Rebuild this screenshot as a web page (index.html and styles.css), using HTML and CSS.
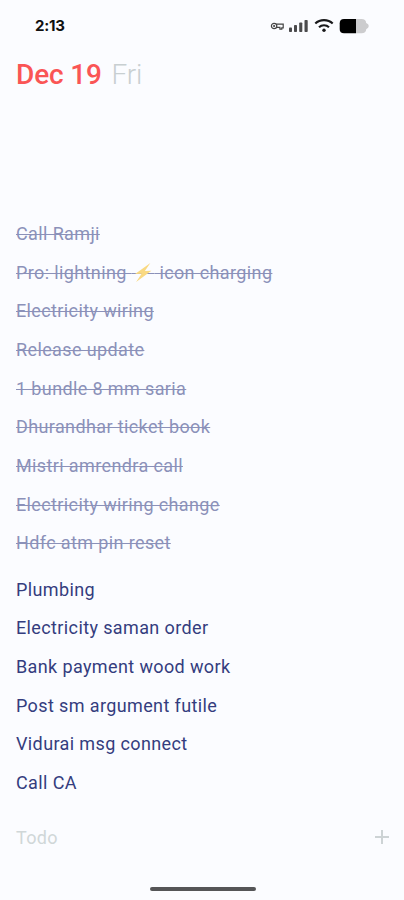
FILE: index.html
```html
<!DOCTYPE html>
<html lang="en">
<head>
<meta charset="utf-8">
<title>Todo</title>
<link rel="stylesheet" href="styles.css">
</head>
<body>
<div class="screen">
  <header class="status">
    <span class="time">2:13</span>
    <svg class="status-icons" width="102" height="20" viewBox="0 0 102 20">
      <g fill="none" stroke="#444" stroke-width="1.2">
        <path d="M6.4 8.1H13.2V11.8H11.8V13.2H9.9V11.3H6.4"/>
        <circle cx="4.1" cy="10" r="2.7"/>
        <circle cx="4.1" cy="10" r=".5"/>
      </g>
      <g fill="#4a4a4c">
        <rect x="19" y="11.5" width="3" height="4.5" rx=".8"/>
        <rect x="24" y="9" width="3" height="7" rx=".8"/>
        <rect x="29.2" y="6.5" width="3.1" height="9.5" rx=".8"/>
        <rect x="34.5" y="4" width="3.2" height="12" rx=".8"/>
      </g>
      <g fill="none" stroke="#18181a" stroke-width="2.1">
        <path d="M45.3 7.6C50 3 58 3 62.7 7.6"/>
        <path d="M49 11.3C51.8 8.6 56.2 8.6 59 11.3"/>
      </g>
      <circle cx="54" cy="14.3" r="1.7" fill="#18181a"/>
      <path d="M86 3H91.5Q96 3 96.2 7Q98.8 8 98.8 10T96.2 13.2Q96 17.2 91.5 17.2H86Z" fill="#ccccce"/>
      <path d="M86 3H74Q69.7 3 69.7 7.3V12.9Q69.7 17.2 74 17.2H86Z" fill="#000"/>
    </svg>
  </header>
  <h1 class="date">Dec 19 <span class="weekday">Fri</span></h1>
  <main class="lists">
    <ul class="list done">
      <li><span>Call Ramji</span></li>
      <li><span>Pro: lightning <span class="emoji">&emsp;<svg class="bolt" viewBox="0 0 18 18"><path d="M15.5 0L1 10.4L7.2 10.2L2 18L16.5 7.4L10.3 7.6Z"/></svg></span> icon charging</span></li>
      <li><span>Electricity wiring</span></li>
      <li><span>Release update</span></li>
      <li><span>1 bundle 8 mm saria</span></li>
      <li><span>Dhurandhar ticket book</span></li>
      <li><span>Mistri amrendra call</span></li>
      <li><span>Electricity wiring change</span></li>
      <li><span>Hdfc atm pin reset</span></li>
    </ul>
    <ul class="list">
      <li>Plumbing</li>
      <li>Electricity saman order</li>
      <li>Bank payment wood work</li>
      <li>Post sm argument futile</li>
      <li>Vidurai msg connect</li>
      <li>Call CA</li>
    </ul>
  </main>
  <footer class="add">
    <span>Todo</span>
    <svg width="14" height="14" viewBox="0 0 14 14"><path d="M7 0V14M0 7H14"/></svg>
  </footer>
  <div class="home"></div>
</div>
</body>
</html>
```
FILE: styles.css
```css
* { box-sizing: border-box; }
body {
  margin: 0;
  background: #fbfcff;
  font-family: Roboto, sans-serif;
}
.screen {
  height: 900px;
  display: flex;
  flex-direction: column;
  overflow: hidden;
}
.status {
  height: 52px;
  padding: 0 32px 0 35px;
  display: flex;
  justify-content: space-between;
  align-items: center;
}
.time {
  margin-top: -1px;
  font-family: Inter, sans-serif;
  font-size: 15px;
  font-weight: 650;
  color: #111;
  letter-spacing: -0.2px;
}
.date {
  margin: 0 0 0 16px;
  height: 163px;
  font-size: 28px;
  line-height: 45px;
  font-weight: 500;
  letter-spacing: -0.15px;
  color: #fa5555;
}
.weekday {
  margin-left: 3px;
  font-weight: 300;
  color: #c8cfd1;
}
.list {
  margin: 0;
  padding: 0 16px;
  list-style: none;
  font-size: 18px;
  font-weight: 380;
  letter-spacing: 0.38px;
  color: #343d7e;
}
.list li {
  height: 38.68px;
  line-height: 38.68px;
  white-space: nowrap;
}
.done {
  margin-bottom: 7.5px;
  color: #8b91b9;
}
.done li > span {
  text-decoration: line-through;
  text-decoration-thickness: 1px;
}
.emoji {
  position: relative;
  letter-spacing: 4.6px;
}
.bolt {
  position: absolute;
  left: 2px;
  top: 1px;
  width: 19px;
  height: 19px;
  fill: #f9d982;
}
.add {
  margin-top: 15.5px;
  height: 38px;
  padding: 0 15px 0 16px;
  display: flex;
  justify-content: space-between;
  align-items: center;
  font-size: 18px;
  letter-spacing: 0.36px;
  color: #d0d7d8;
}
.add svg {
  fill: none;
  stroke: #cdd3d5;
  stroke-width: 2;
}
.home {
  width: 106px;
  height: 3.5px;
  margin: 31px auto 0 149.5px;
  border-radius: 2px;
  background: #555557;
}
```
